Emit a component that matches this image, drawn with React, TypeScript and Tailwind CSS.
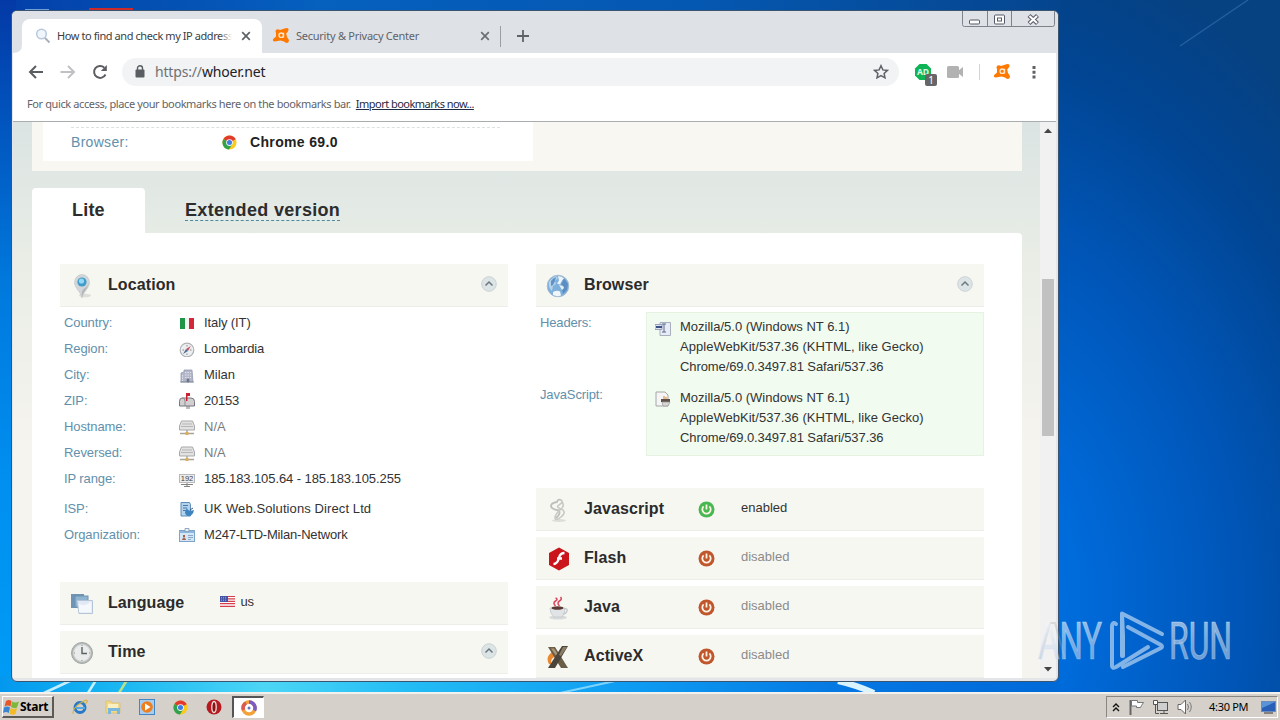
import type { ReactNode } from "react";

type IconName =
  | "flag-it" | "compass" | "building" | "mailbox" | "host" | "range" | "isp" | "card";

interface LocationRow {
  label: string;
  value: string;
  icon: IconName;
  muted?: boolean;
  tall?: boolean;
  tracking: string;
}

const LOCATION_ROWS: LocationRow[] = [
  { label: "Country:", value: "Italy (IT)", icon: "flag-it", tracking: "tracking-[-0.1px]" },
  { label: "Region:", value: "Lombardia", icon: "compass", tracking: "tracking-[-0.15px]" },
  { label: "City:", value: "Milan", icon: "building", tracking: "tracking-normal" },
  { label: "ZIP:", value: "20153", icon: "mailbox", tracking: "tracking-[-0.2px]" },
  { label: "Hostname:", value: "N/A", icon: "host", muted: true, tracking: "tracking-normal" },
  { label: "Reversed:", value: "N/A", icon: "host", muted: true, tracking: "tracking-normal" },
  { label: "IP range:", value: "185.183.105.64 - 185.183.105.255", icon: "range", tall: true, tracking: "tracking-[-0.08px]" },
  { label: "ISP:", value: "UK Web.Solutions Direct Ltd", icon: "isp", tracking: "tracking-[0.1px]" },
  { label: "Organization:", value: "M247-LTD-Milan-Network", icon: "card", tracking: "tracking-[-0.2px]" },
];

const UA_LINES = [
  { text: "Mozilla/5.0 (Windows NT 6.1)", tracking: "tracking-normal" },
  { text: "AppleWebKit/537.36 (KHTML, like Gecko)", tracking: "tracking-[0.03px]" },
  { text: "Chrome/69.0.3497.81 Safari/537.36", tracking: "tracking-[-0.1px]" },
];

function Wallpaper() {
  return (
    <svg className="absolute inset-0" width="1280" height="720" viewBox="0 0 1280 720">
      <defs>
        <linearGradient id="wp-top" x1="0" x2="1" y1="0" y2="0">
          <stop offset="0" stopColor="#033fa8" />
          <stop offset="0.3" stopColor="#0560be" />
          <stop offset="0.65" stopColor="#0558b2" />
          <stop offset="1" stopColor="#05458e" />
        </linearGradient>
        <linearGradient id="wp-left" x1="0" x2="0" y1="0" y2="1">
          <stop offset="0" stopColor="#0339a6" />
          <stop offset="0.4" stopColor="#0078dc" />
          <stop offset="0.7" stopColor="#0090f0" />
          <stop offset="1" stopColor="#009cf4" />
        </linearGradient>
        <radialGradient id="wp-right" gradientUnits="userSpaceOnUse" cx="0" cy="0" r="1" gradientTransform="translate(940 600) scale(520 680)">
          <stop offset="0" stopColor="#0078e6" />
          <stop offset="0.25" stopColor="#006cdc" />
          <stop offset="0.55" stopColor="#0057ba" />
          <stop offset="0.82" stopColor="#014593" />
          <stop offset="1" stopColor="#064182" />
        </radialGradient>
        <linearGradient id="wp-bottom" x1="0" x2="1" y1="0" y2="0">
          <stop offset="0" stopColor="#0398ee" />
          <stop offset="0.1" stopColor="#16b4f2" />
          <stop offset="0.25" stopColor="#4cd6f6" />
          <stop offset="0.38" stopColor="#24bdf5" />
          <stop offset="0.6" stopColor="#0d9bf2" />
          <stop offset="0.8" stopColor="#0577e2" />
          <stop offset="1" stopColor="#0069d8" />
        </linearGradient>
      </defs>
      <rect width="1280" height="720" fill="url(#wp-right)" />
      <rect width="1060" height="14" fill="url(#wp-top)" />
      <rect width="16" height="695" fill="url(#wp-left)" />
      <rect y="676" width="1060" height="18" fill="url(#wp-bottom)" />
      <path d="M25 9.500h24" stroke="#6f9fd4" />
      <rect x="89" y="8" width="44" height="3" fill="#cf2a2a" />
      <path d="M1180 46 L1248 0" stroke="#3d7dba" strokeWidth="1.5" opacity=".5" />
      <path d="M44 693 L72 680 M88 693 L96 680" stroke="#c5eefc" strokeWidth="2.5" />
      <path d="M119 693 L127 680" stroke="#b8e08a" strokeWidth="2.5" />
      <path d="M560 693 L615 681" stroke="#7dd3fa" strokeWidth="2" />
      <path d="M838 681 Q856 685 874 693" stroke="#d9f3ff" strokeWidth="6" fill="none" />
    </svg>
  );
}

function AvastMark({ size }: { size: number }) {
  return (
    <svg width={size} height={size} viewBox="0 0 18 18" className="shrink-0">
      <path
        d="M4.2 2.8 Q6 1.6 8 3 L12.5 1.4 Q16.8.2 16.6 3 Q16 5 14.2 6.4 L15 10 Q17.6 12.6 16.6 15 Q14.6 17 12 14.6 L8.5 13.6 L2.6 14.6 Q.2 14 1.2 12 L4 9.5 L4 6 Q2.8 4 4.2 2.8z"
        fill="#ff7800"
      />
      <circle cx="9.2" cy="8.2" r="2.2" fill="none" stroke="#ffe6cc" strokeWidth="1.3" />
      <path d="M11.6 5.8v4.600" stroke="#ffe6cc" strokeWidth="1.2" />
    </svg>
  );
}

function ChromeMark({ size }: { size: number }) {
  return (
    <svg width={size} height={size} viewBox="0 0 16 16" className="shrink-0">
      <circle cx="8" cy="8" r="7.5" fill="#fbcb1c" />
      <path d="M8 8 L1.5 4.2 A7.5 7.5 0 0 1 14.5 4.2z M8 4.5h6.7L8 8z" fill="#e23a2e" />
      <path d="M1.5 4.2 A7.5 7.5 0 0 0 7.4 15.5 L11 9.8 L8 8z" fill="#2fa14f" />
      <circle cx="8" cy="8" r="3.6" fill="#f5f5f5" />
      <circle cx="8" cy="8" r="2.7" fill="#3f7de0" />
    </svg>
  );
}

function CloseX({ color }: { color: string }) {
  return (
    <svg width="10" height="10" viewBox="0 0 10 10" className="shrink-0">
      <path d="M1.2 1.2l7.6 7.6M8.8 1.2L1.2 8.8" stroke={color} strokeWidth="1.7" />
    </svg>
  );
}

function WindowButtons() {
  return (
    <svg className="absolute -top-px right-[3px]" width="93" height="18" viewBox="0 0 93 18">
      <path d="M.5 0v14.5q0 2 2 2h88q2 0 2-2V0M25.500 0v16.500M49.500 0v16.500" fill="none" stroke="#7e828a" />
      <rect x="7.500" y="10" width="10" height="4" rx="1" fill="#fff" stroke="#555968" />
      <rect x="32.500" y="5" width="10" height="9" rx="1" fill="#fff" stroke="#555968" />
      <rect x="35.500" y="8" width="4" height="3" fill="#fff" stroke="#555968" />
      <path d="M67 5.500l8.500 8M75.500 5.500l-8.500 8" stroke="#5c5f6d" strokeWidth="4.200" />
      <path d="M67.500 6l7.500 7M75 6l-7.500 7" stroke="#fff" strokeWidth="2" />
    </svg>
  );
}

function TabStrip() {
  return (
    <div className="relative flex h-[42px] pl-px bg-[#dee1e6] rounded-t">
      <WindowButtons />
      <svg className="self-end mr-[-1px]" width="10" height="8" viewBox="0 0 10 8">
        <path d="M0 8 Q9 8 9 0 H10 V8z" fill="#fff" />
      </svg>
      <div className="mt-2 w-[240px] flex items-center bg-white rounded-t-lg pl-[13px] pr-[11px]">
        <svg width="16" height="16" viewBox="0 0 16 16" className="shrink-0">
          <circle cx="6.500" cy="6" r="4.800" fill="#eef5fb" stroke="#b9c8dc" strokeWidth="1.500" />
          <path d="M10 10l4.500 4.500" stroke="#a8b0bb" strokeWidth="2" />
        </svg>
        <span className="relative ml-[6px] w-[175px] overflow-hidden whitespace-nowrap text-[11px] tracking-[-0.42px] text-[#3c4043]">
          How to find and check my IP address
          <span className="absolute right-0 top-0 h-full w-3 bg-linear-to-r from-transparent to-white" />
        </span>
        <span className="ml-auto flex"><CloseX color="#5f6368" /></span>
      </div>
      <div className="mt-2 flex-1 flex items-center pl-[10px]">
        <AvastMark size={18} />
        <span className="ml-[6px] w-[184px] text-[11px] tracking-[-0.25px] text-[#5f6368] whitespace-nowrap">Security &amp; Privacy Center</span>
        <CloseX color="#6b6f75" />
        <span className="ml-[10px] w-px h-[21px] bg-[#9a9ea5]" />
        <svg className="ml-[16px]" width="12" height="12" viewBox="0 0 12 12">
          <path d="M6 0v12M0 6h12" stroke="#5f6368" strokeWidth="1.800" />
        </svg>
      </div>
    </div>
  );
}

function Toolbar() {
  return (
    <div className="flex h-[37px] items-center bg-white pl-[15px]">
      <svg width="16" height="14" viewBox="0 0 16 14">
        <path d="M15 7H2M8 1L2 7l6 6" fill="none" stroke="#5a5d61" strokeWidth="2" />
      </svg>
      <svg className="ml-4" width="16" height="14" viewBox="0 0 16 14">
        <path d="M.5 7H14M8 1l6 6-6 6" fill="none" stroke="#bfc1c4" strokeWidth="2" />
      </svg>
      <svg className="ml-4" width="16" height="16" viewBox="0 0 16 16">
        <path d="M13.500 10.500A6 6 0 1 1 12.300 3.600" fill="none" stroke="#5a5d61" strokeWidth="2" />
        <path d="M14.800 1v6h-6z" fill="#5a5d61" />
      </svg>
      <div className="ml-[14px] flex h-7 w-[777px] items-center rounded-full bg-[#f1f3f4] pl-[13px] pr-[10px]">
        <svg width="10" height="13" viewBox="0 0 10 13">
          <rect x=".5" y="4.500" width="9" height="8" rx="1" fill="#5a5d61" />
          <path d="M2.500 5V3.200a2.500 2.500 0 0 1 5 0V5" fill="none" stroke="#5a5d61" strokeWidth="1.400" />
        </svg>
        <span className="ml-[10px] text-[14px] tracking-[-0.17px] text-[#202124]">
          <span className="text-[#6d7176]">https://</span>whoer.net
        </span>
        <svg className="ml-auto" width="16" height="16" viewBox="0 0 16 16">
          <path d="M8 1.700l1.900 4.200 4.500.5-3.300 3 .9 4.500L8 11.600l-4 2.300.9-4.500-3.300-3 4.500-.5z" fill="none" stroke="#5f6368" strokeWidth="1.500" />
        </svg>
      </div>
      <span className="relative ml-[15px] size-[18px]">
        <svg width="18" height="18" viewBox="0 0 18 18">
          <path d="M5.500 1h7L17 5.500v7L12.500 17h-7L1 12.500v-7z" fill="#0fb457" />
          <text x="9" y="12.300" textAnchor="middle" fontSize="8.500" fontWeight="bold" fill="#dff7e8">AD</text>
        </svg>
        <span className="absolute left-[11px] top-[11px] flex size-3 items-center justify-center rounded-[2px] bg-[#666] text-[10px] leading-none text-white">1</span>
      </span>
      <svg className="ml-[15px]" width="17" height="14" viewBox="0 0 17 14">
        <rect x="0" y="1" width="12" height="12" rx="1.500" fill="#b2b2b2" />
        <path d="M11 6l5-4v10l-5-4z" fill="#b2b2b2" />
      </svg>
      <span className="ml-[15px] mr-[13px] h-4 w-px bg-[#d2d4d7]" />
      <AvastMark size={18} />
      <svg className="ml-[21px]" width="4" height="14" viewBox="0 0 4 14">
        <path d="M.5 1h3v3h-3zM.5 5.700h3v3h-3zM.5 10.400h3v3h-3z" fill="#5f6368" />
      </svg>
    </div>
  );
}

function Collapse() {
  return (
    <svg width="18" height="18" viewBox="0 0 18 18" className="shrink-0">
      <circle cx="9" cy="9" r="7.300" fill="#dde4e6" stroke="#cbd3d6" />
      <path d="M5.500 10.500L9 7l3.500 3.500" fill="none" stroke="#6b7880" strokeWidth="1.500" />
    </svg>
  );
}

function PinIcon() {
  return (
    <svg width="24" height="26" viewBox="0 0 24 26">
      <ellipse cx="15" cy="22.500" rx="6" ry="1.800" fill="#deded8" />
      <path d="M12 25C11 19 4.500 15 4.500 9.500a7.500 8 0 0 1 15 0C19.500 15 13 19 12 25z" fill="#d3d6d8" stroke="#c0c4c6" strokeWidth=".6" />
      <path d="M12 24C11 19 13 16 15 15q3-2 3.500-5c0 5-5 8-6.500 14z" fill="#b2b6b8" />
      <circle cx="12" cy="9" r="4.600" fill="#3f9ccb" />
      <circle cx="11.500" cy="8" r="2.600" fill="#93d8f4" />
    </svg>
  );
}

function GlobeIcon() {
  return (
    <svg width="24" height="24" viewBox="0 0 24 24">
      <circle cx="12" cy="12" r="10.800" fill="#7fb0dc" stroke="#a5b7c9" strokeWidth=".8" />
      <path d="M3 8q3-5 7-6l2 2-3 3 1 3-3 2-1 5q-4-3-3-9z" fill="#b5d2ea" />
      <path d="M5 7q2-3 5-4l-1 4-2 4-2 1z" fill="#5f93c8" />
      <path d="M16 3.500q4 2 6 6.500l-1 6-4 4-1-4 2-3-3-3 2-3z" fill="#5b8fc4" />
      <path d="M12 2q4 0 6 2.500l-2 2-2 4-3-1 2-3z" fill="#eef5fa" />
      <path d="M13 11l4 1 1 2-2 2z" fill="#e2edf6" />
      <path d="M7 18q4-2 7-.5l1 4q-4 1.500-8-.5z" fill="#f2f6f9" />
    </svg>
  );
}

function LanguageIcon() {
  return (
    <svg width="24" height="24" viewBox="0 0 24 24">
      <rect x="1.500" y="2.500" width="12" height="13" fill="#6c95b8" stroke="#7294b0" />
      <rect x="5" y="4" width="13" height="11" fill="#8fb4cf" stroke="#6d91af" />
      <path d="M7 8.500h15.500v13H9z" fill="#e6edf6" fillOpacity=".93" stroke="#b5c5d8" />
      <path d="M9 12q6 3 12-2v10H9z" fill="#f5f8fc" />
    </svg>
  );
}

function ClockIcon() {
  return (
    <svg width="24" height="24" viewBox="0 0 24 24">
      <circle cx="12" cy="12" r="10.500" fill="#b5bab9" stroke="#a3a8a8" />
      <circle cx="12" cy="12" r="8.500" fill="#e9ecea" stroke="#d0d4d2" />
      <path d="M12 6v6.500h5" fill="none" stroke="#5b6264" strokeWidth="1.400" />
      <path d="M12 4v1M12 19v1M4 12h1M19 12h1" stroke="#8b9192" />
    </svg>
  );
}

function ScrollIcon() {
  return (
    <svg width="24" height="26" viewBox="0 0 24 26">
      <ellipse cx="13" cy="23.500" rx="7" ry="1.500" fill="#dcdcd8" />
      <path d="M15 3 Q12 1.500 11 5 Q5 6 5 9 Q5 12 13 13.500 Q15 17 10 21" fill="none" stroke="#bebebc" strokeWidth="1.800" />
      <path d="M15 3 Q18 5 13 8 Q9 10 17 13 Q20 16 15 20 Q10 24 9 21 Q9 17 16 11 Q19 8 15 3" fill="none" stroke="#c8c8c5" strokeWidth="1.600" />
    </svg>
  );
}

function FlashIcon() {
  return (
    <svg width="24" height="24" viewBox="0 0 24 24">
      <path d="M13 .5l10 5.500v12L13 23.500 3 18V6z" fill="#c9151b" />
      <path d="M18.500 6q-4.500 0-5.500 5-1.500 6-5.500 6M11 11.500h5" fill="none" stroke="#fff" strokeWidth="2.300" />
    </svg>
  );
}

function JavaIcon() {
  return (
    <svg width="24" height="26" viewBox="0 0 24 26">
      <ellipse cx="12" cy="22.500" rx="9" ry="2" fill="#d9dadb" />
      <path d="M4 13h15q0 6-3 9H8q-4-3-4-9z" fill="#e1e4e6" stroke="#c0c4c6" strokeWidth=".7" />
      <path d="M18 14q4-1 3 2t-4 3" fill="none" stroke="#c5c9cb" strokeWidth="1.400" />
      <ellipse cx="11.500" cy="13" rx="6" ry="1.800" fill="#5a3a35" />
      <path d="M9.500 11q-3-3 0-5t0-3M13.500 11q-3-3 0-5t1-4" fill="none" stroke="#dc4a60" strokeWidth="1.600" />
    </svg>
  );
}

function ActiveXIcon() {
  return (
    <svg width="24" height="24" viewBox="0 0 24 24">
      <path d="M6 7q-7 5-3 12l3 1q-3-6 4-9z" fill="#e8892f" />
      <path d="M2 2h7l13 21h-7z" fill="#6c5d47" />
      <path d="M5 3.500h3l6 9-2 1z" fill="#a89878" />
      <path d="M16 1h6L9 23H2z" fill="#4b443a" />
      <path d="M17 2h4l-6 9-2-1z" fill="#8d7f66" />
    </svg>
  );
}

function PowerIcon({ on }: { on: boolean }) {
  return (
    <svg width="17" height="17" viewBox="0 0 17 17" className="shrink-0">
      <circle cx="8.500" cy="8.500" r="8" fill={on ? "#48b850" : "#c0562b"} />
      <path d="M5.600 5.300a4.200 4.200 0 1 0 5.800 0M8.500 3.500v5" fill="none" stroke="#fff4e6" strokeWidth="1.800" />
    </svg>
  );
}

function RowIcon({ name }: { name: IconName }) {
  switch (name) {
    case "flag-it":
      return (
        <svg width="16" height="16" viewBox="0 0 16 16">
          <rect x="1" y="3" width="14" height="11" fill="#f4f4f2" />
          <path d="M1 3h5v11H1z" fill="#209447" />
          <path d="M10 3h5v11h-5z" fill="#d4283a" />
        </svg>
      );
    case "compass":
      return (
        <svg width="16" height="16" viewBox="0 0 16 16">
          <circle cx="8" cy="9" r="6.800" fill="#eceeef" stroke="#b0b3b6" strokeWidth="1.200" />
          <path d="M11.800 5L9 10 7 8z" fill="#c9505a" />
          <path d="M4 13L7 8l2 2z" fill="#4e6d96" />
          <path d="M8 4v1.500M8 12.500V14M3.500 9H5M11 9h1.500" stroke="#888" />
        </svg>
      );
    case "building":
      return (
        <svg width="16" height="16" viewBox="0 0 16 16">
          <path d="M2 6l3-1V3h8l1 12H2z" fill="#b3b6c8" stroke="#969bb0" strokeWidth=".8" />
          <path d="M6 5.500h6M6 8h6M6 10.500h6M3.500 8v6" stroke="#e1e3ec" strokeDasharray="1.500 1" />
          <path d="M8 12h2v3H8zM1 15h14" fill="#666d84" stroke="#777e92" strokeWidth=".7" />
        </svg>
      );
    case "mailbox":
      return (
        <svg width="16" height="16" viewBox="0 0 16 16">
          <path d="M3 5h9q3.500 0 3.500 3.500V13H.5V8.500Q.5 5 3 5z" fill="#d2cfd2" stroke="#77757b" />
          <path d="M6 13V8q0-3-2.500-3" fill="none" stroke="#8b898f" />
          <path d="M8 13v3M10 13v3" stroke="#79777c" />
          <path d="M7 0h4v3H8.500v5H7z" fill="#cd202e" />
        </svg>
      );
    case "host":
      return (
        <svg width="16" height="16" viewBox="0 0 16 16">
          <path d="M2.500 2h11l2 5v4H.5V7z" fill="#e2e2e2" stroke="#a9a9a9" />
          <path d="M3 5h10M2 7.500h12" stroke="#b5b5b5" />
          <path d="M8 11v3M1 14.500h14" stroke="#a8a499" strokeWidth="1.400" />
          <path d="M6.500 13h3v3h-3z" fill="#dcae55" />
        </svg>
      );
    case "range":
      return (
        <svg width="16" height="16" viewBox="0 0 16 16">
          <rect x=".5" y="3.500" width="15" height="8" fill="#ededed" stroke="#b9b9b9" />
          <text x="8" y="10" textAnchor="middle" fontSize="7.500" fill="#3b3b3b">192</text>
          <path d="M8 12v3M2 13.500h12M5 15.500h6" stroke="#828282" />
        </svg>
      );
    case "isp":
      return (
        <svg width="16" height="16" viewBox="0 0 16 16">
          <path d="M2 1.500h8.500l1 2V15H2z" fill="#b3d2ec" stroke="#5e8cb8" />
          <path d="M4 4.500h5M4 7h4M4 9.500h3" stroke="#4779aa" />
          <path d="M8 7q1 4 7 2-1 6-6 6-3-1-3-4z" fill="#3d84c1" />
          <path d="M11 9l3-2" stroke="#315d87" />
        </svg>
      );
    case "card":
      return (
        <svg width="16" height="16" viewBox="0 0 16 16">
          <rect x=".5" y="3.500" width="15" height="11" fill="#d4e7f7" stroke="#7ca3c8" />
          <path d="M.5 4h15v2H.5z" fill="#8db7dc" />
          <path d="M6 1.500h4v3H6z" fill="#e6edf3" stroke="#7f99b1" strokeWidth=".8" />
          <path d="M3 13q0-2 2-2t2 2z M4 8h2v2.500H4z" fill="#a85e45" />
          <path d="M9 8.500h5M9 10.500h5M9 12.500h3" stroke="#8aa9c5" />
        </svg>
      );
  }
}

function SectionHead({ icon, title, children }: { icon: ReactNode; title: string; children?: ReactNode }) {
  return (
    <div className="flex h-[43px] items-center border-b border-[#edeee9] bg-[#f7f7f2] pl-[10px] pr-[10px]">
      <span className="flex w-[38px] pt-px">{icon}</span>
      <h2 className="text-[16px] font-bold tracking-[0.1px] text-[#2b2b2b]">{title}</h2>
      {children}
    </div>
  );
}

function LocationColumn() {
  return (
    <div className="w-[448px]">
      <SectionHead icon={<PinIcon />} title="Location">
        <span className="ml-auto flex pb-[3px]"><Collapse /></span>
      </SectionHead>
      <div className="h-[275px] pt-[3px]">
        {LOCATION_ROWS.map((row) => (
          <div key={row.label} className={row.tall ? "flex h-[30px] items-start" : "flex h-[26px] items-start"}>
            <span className="w-[119px] pl-1 leading-[26px] tracking-[-0.1px] text-[#6290ab]">{row.label}</span>
            <span className="w-[25px] pt-[5px]"><RowIcon name={row.icon} /></span>
            <span className={`leading-[26px] ${row.tracking} ${row.muted ? "text-[#7b7b7b]" : "text-[#333]"}`}>{row.value}</span>
          </div>
        ))}
      </div>
      <SectionHead icon={<LanguageIcon />} title="Language">
        <span className="ml-[36px] flex items-center gap-[5px] pb-[3px] text-[#333]">
          <svg width="15" height="11" viewBox="0 0 15 11">
            <path d="M0 0h15v11H0z" fill="#fff" />
            <path d="M0 .5h15M0 2.900h15M0 5.300h15M0 7.700h15M0 10.300h15" stroke="#d33f4b" strokeWidth="1.200" />
            <path d="M0 0h8v6H0z" fill="#4355a4" />
            <path d="M1 1.500h6M1 3h6M1 4.500h6" stroke="#b7bfe2" strokeWidth=".6" strokeDasharray="1 1" />
          </svg>
          us
        </span>
      </SectionHead>
      <div className="h-[6px]" />
      <SectionHead icon={<ClockIcon />} title="Time">
        <span className="ml-auto flex pb-[3px]"><Collapse /></span>
      </SectionHead>
    </div>
  );
}

function UserAgent({ icon }: { icon: ReactNode }) {
  return (
    <div className="flex pl-[8px]">
      <span className="w-[25px] pt-[3px]">{icon}</span>
      <div className="whitespace-nowrap leading-5 text-[#333]">
        {UA_LINES.map((line) => (
          <p key={line.text} className={line.tracking}>{line.text}</p>
        ))}
      </div>
    </div>
  );
}

function Plugin({ icon, title, on }: { icon: ReactNode; title: string; on?: boolean }) {
  return (
    <div className="mb-[6px]">
      <SectionHead icon={icon} title={title}>
        <span className="ml-auto flex w-[276px] items-center">
          <span className="w-[43px] pt-px"><PowerIcon on={!!on} /></span>
          <span className={on ? "pb-[3px] text-[#333]" : "pb-[3px] text-[#8b8b8b]"}>{on ? "enabled" : "disabled"}</span>
        </span>
      </SectionHead>
    </div>
  );
}

function BrowserColumn() {
  return (
    <div className="w-[448px]">
      <SectionHead icon={<GlobeIcon />} title="Browser">
        <span className="ml-auto flex pb-[3px]"><Collapse /></span>
      </SectionHead>
      <div className="flex h-[181px] pt-[5px]">
        <div className="w-[110px] pl-1 tracking-[-0.15px] text-[#6290ab]">
          <p className="h-[72px] leading-[22px]">Headers:</p>
          <p className="leading-[22px]">JavaScript:</p>
        </div>
        <div className="flex h-36 flex-1 flex-col gap-[11px] border border-[#e6f2e2] bg-[#f1fbf0] pt-1">
          <UserAgent
            icon={
              <svg width="16" height="16" viewBox="0 0 16 16">
                <path d="M5 2.500h10.500v13H5z" fill="#e8edf5" stroke="#a9b0bd" />
                <path d="M0 4.500h7v5H0z" fill="#dfe5ef" stroke="#8791a8" strokeWidth=".8" />
                <path d="M1 7h6" stroke="#395184" strokeWidth="2" />
                <path d="M7 4h4M9 4v8M7 12h4" stroke="#596b91" />
              </svg>
            }
          />
          <UserAgent
            icon={
              <svg width="16" height="16" viewBox="0 0 16 16">
                <path d="M1 1h9l3 3v11H1z" fill="#f5f5f5" stroke="#a6a6a6" />
                <path d="M6 8h9v3H6z" fill="#5e5149" />
                <path d="M7 11h8l-2 4H8z" fill="#d6d6d6" stroke="#999" strokeWidth=".7" />
                <path d="M9 5v3M11 6v2" stroke="#d88434" />
              </svg>
            }
          />
        </div>
      </div>
      <Plugin icon={<ScrollIcon />} title="Javascript" on />
      <Plugin icon={<FlashIcon />} title="Flash" />
      <Plugin icon={<JavaIcon />} title="Java" />
      <Plugin icon={<ActiveXIcon />} title="ActiveX" />
    </div>
  );
}

function WhoerPage() {
  return (
    <div className="h-full w-[1027px] overflow-hidden bg-linear-to-b from-[#dbe4e3] via-[#e9ede6] via-25% to-[#f6f4ef] to-60% pl-[19px] font-['Liberation_Sans',Arial,sans-serif] text-[13px]">
      <div className="h-[49px] w-[990px] bg-[#f8f7f2] pl-[11px]">
        <div className="h-[39px] w-[490px] bg-white pl-7 pr-[33px] pt-[5px]">
          <div className="border-t border-dashed border-[#dbe0e0]" />
          <div className="flex h-[29px] items-center">
            <span className="w-[151px] text-[14px] tracking-[0.3px] text-[#6290ab]">Browser:</span>
            <ChromeMark size={15} />
            <span className="ml-[13px] text-[14px] font-bold tracking-[0.35px] text-[#222]">Chrome 69.0</span>
          </div>
        </div>
      </div>
      <div className="mt-[17px] flex h-[45px] items-start text-[18px] font-bold leading-[21px] text-[#2d2d2d]">
        <div className="h-[45px] w-[113px] rounded-t bg-white pl-10 pt-3 tracking-[0.2px]">Lite</div>
        <div className="ml-10 mt-3 h-[21px] border-b border-dashed border-[#4c8ba1] tracking-[0.32px]">Extended version</div>
      </div>
      <div className="flex h-[450px] w-[990px] gap-7 rounded-tr bg-white pl-7 pt-[31px]">
        <LocationColumn />
        <BrowserColumn />
      </div>
    </div>
  );
}

function BrowserWindow() {
  return (
    <div className="absolute left-[11px] top-[10px] flex h-[672px] w-[1048px] flex-col overflow-hidden rounded-md border border-[#3b5470] bg-[#e4e5e8] font-['Noto_Sans',Tahoma,sans-serif]">
      <TabStrip />
      <div className="mr-[2px] ml-px flex flex-1 flex-col">
        <Toolbar />
        <div className="flex h-8 items-center border-b border-[#a9adaf] bg-white pb-[2px] pl-[14px] text-[11px] text-[#5f6368]">
          <span className="whitespace-nowrap tracking-[-0.39px]">For quick access, place your bookmarks here on the bookmarks bar.</span>
          <span className="ml-[5px] whitespace-nowrap tracking-[-0.52px] text-[#1f2a44] underline">Import bookmarks now...</span>
        </div>
        <div className="flex h-[556px] overflow-hidden">
          <WhoerPage />
          <div className="flex w-4 flex-col items-center bg-[#f1f1f1]">
            <svg className="mt-[6px]" width="8" height="5" viewBox="0 0 8 5"><path d="M0 5l4-4.500L8 5z" fill="#454545" /></svg>
            <div className="mt-[146px] h-[157px] w-3 bg-[#c1c1c1]" />
            <svg className="mt-auto mb-[6px]" width="8" height="5" viewBox="0 0 8 5"><path d="M0 0l4 4.500L8 0z" fill="#454545" /></svg>
          </div>
        </div>
      </div>
    </div>
  );
}

function Watermark() {
  return (
    <svg className="absolute left-[1036px] top-[606px]" width="210" height="70" viewBox="0 0 210 70">
      <defs>
        <linearGradient id="wm" x1="0" x2="0" y1="0" y2="1">
          <stop offset="0" stopColor="#fff" stopOpacity=".62" />
          <stop offset="0.5" stopColor="#d7e2f0" stopOpacity=".56" />
          <stop offset="1" stopColor="#b9cdea" stopOpacity=".55" />
        </linearGradient>
      </defs>
      <path d="M4 53L14 17h5l10 36" fill="none" stroke="#9da2a8" strokeOpacity=".3" strokeWidth="2" />
      <g fill="url(#wm)" stroke="url(#wm)" strokeWidth=".7" fontFamily="Roboto, sans-serif" fontSize="52">
        <text transform="translate(2 53) scale(.64 1)" textLength="100" lengthAdjust="spacingAndGlyphs">ANY</text>
        <text transform="translate(133 53) scale(.6 1)" textLength="105" lengthAdjust="spacingAndGlyphs">RUN</text>
      </g>
      <g fill="none" stroke="#b9d5f2" strokeOpacity=".7" strokeWidth="4" strokeLinejoin="round" strokeLinecap="round">
        <path d="M87 50V30L86 7.500Q86 16 86 7.500L126 28M86 8v42" strokeOpacity=".72" />
        <path d="M80 23Q76 20 76 26V65Q76 68 80 66L112 46" transform="translate(0 -5)" />
        <path d="M92 21L125 39Q127 41 125 42L87 61" />
      </g>
    </svg>
  );
}

function Taskbar() {
  return (
    <div className="absolute inset-x-0 bottom-0 flex h-[28px] items-center border-t-2 border-[#f3f1ee] bg-[#d5d0c9] font-['Noto_Sans',Tahoma,sans-serif] text-[11px] text-black">
      <div className="ml-[2px] flex h-[22px] w-[52px] items-center border border-r-2 border-b-2 border-t-white border-l-white border-r-[#5c5a57] border-b-[#5c5a57]">
        <svg width="17" height="16" viewBox="0 0 17 16" className="shrink-0">
          <path d="M3 2q3-2 5.500 0l-1 5.500q-3-2-6 0z" fill="#e5572a" />
          <path d="M9 2.500q3 2 7 0l-2 6q-3 1.500-6-.5z" fill="#7cb93b" />
          <path d="M1 8.500q3-2 6 0l-1.200 5.500q-3-2-5.800 0z" fill="#3a85d2" />
          <path d="M7.500 9q3 2 6.500 0L12.500 15q-3.500 1.500-6-.5z" fill="#f3bc27" />
        </svg>
        <span className="text-[12px] font-bold tracking-[-0.25px]">Start</span>
      </div>
      <svg className="ml-[18px]" width="16" height="16" viewBox="0 0 16 16">
        <circle cx="8" cy="8.500" r="5" fill="none" stroke="#2878c8" strokeWidth="3" />
        <path d="M4 9h9" stroke="#55aae5" strokeWidth="2" />
        <path d="M1 14.500Q0 8 14 1q3 1-1 4" fill="none" stroke="#d6b33d" strokeWidth="1.200" />
      </svg>
      <svg className="ml-[17px]" width="16" height="16" viewBox="0 0 16 16">
        <path d="M1 2h5l1 2h8v10H1z" fill="#f0d98a" stroke="#d6b862" strokeWidth=".6" />
        <path d="M3 5h10v4H3z" fill="#faefc0" />
        <path d="M3 15V9h12v6h-3v-3H6v3z" fill="#79b7dc" />
      </svg>
      <svg className="ml-[18px]" width="16" height="16" viewBox="0 0 16 16">
        <rect x=".5" y=".5" width="15" height="15" fill="#a9cdee" stroke="#4386c5" />
        <circle cx="8" cy="8" r="5.800" fill="#ec7f1f" />
        <path d="M6 4.500L11.500 8 6 11.500z" fill="#fff" />
      </svg>
      <span className="ml-[18px]"><ChromeMark size={15} /></span>
      <svg className="ml-[18px]" width="16" height="16" viewBox="0 0 16 16">
        <circle cx="8" cy="8" r="7.500" fill="#b51a20" />
        <ellipse cx="8" cy="8" rx="2.200" ry="5.500" fill="#8c1216" stroke="#eee0dc" strokeWidth="1.300" />
      </svg>
      <div className="ml-[10px] flex h-[22px] w-8 items-center justify-center border border-l-2 border-t-2 border-t-[#555] border-l-[#555] border-white bg-white">
        <svg width="16" height="16" viewBox="0 0 16 16">
          <circle cx="8" cy="8" r="6" fill="none" stroke="#f3a13b" strokeWidth="3.500" />
          <path d="M8 2a6 6 0 0 1 5.500 8.500" fill="none" stroke="#7c5bc2" strokeWidth="3.500" />
          <path d="M2.500 10A6 6 0 0 1 5 3" fill="none" stroke="#dc5a54" strokeWidth="3.500" />
          <circle cx="8" cy="8" r="1.500" fill="#6b72c8" />
        </svg>
      </div>
      <div className="ml-auto mr-[2px] flex h-[22px] w-[172px] items-center border border-t-[#8a8782] border-l-[#8a8782] border-r-white border-b-white pl-[5px]">
        <svg width="8" height="9" viewBox="0 0 8 9">
          <path d="M1 4l3-3 3 3M1 8l3-3 3 3" fill="none" stroke="#111" strokeWidth="1.400" />
        </svg>
        <svg className="ml-[9px]" width="16" height="16" viewBox="0 0 16 16">
          <path d="M1.500 1v15" stroke="#666" strokeWidth="2" />
          <path d="M2.500 1.500h6v2h6l-2 3-1 2H7.500V7h-5z" fill="#fff" stroke="#777" />
        </svg>
        <svg className="ml-[7px]" width="17" height="16" viewBox="0 0 17 16">
          <rect x="5.500" y="3.500" width="10" height="8" fill="#cfcfcf" stroke="#555" />
          <path d="M8 14.500h8M12 12v2" stroke="#555" />
          <path d="M1.500 1.500h4v4h-4z" fill="#fff" stroke="#555" />
          <path d="M3.500 6v8.500H7" fill="none" stroke="#555" />
        </svg>
        <svg className="ml-[8px]" width="16" height="16" viewBox="0 0 16 16">
          <path d="M1 5.500h3L8.500 1v14L4 10.500H1z" fill="#fff" stroke="#666" />
          <path d="M10.500 5q2 3 0 6M12.500 3q3.500 5 0 10" fill="none" stroke="#777" />
        </svg>
        <span className="ml-[16px] whitespace-nowrap tracking-[-0.3px]">4:30 PM</span>
        <svg className="ml-auto mr-px" width="15" height="13" viewBox="0 0 15 13">
          <rect x=".5" y=".5" width="14" height="10" fill="#2860b8" stroke="#6b8cba" />
          <path d="M1 1h13L1 7z" fill="#5a93d8" />
          <path d="M3 12h9" stroke="#333" />
        </svg>
      </div>
    </div>
  );
}

export default function App() {
  return (
    <div className="relative h-[720px] w-[1280px] overflow-hidden bg-[#0060c4]">
      <Wallpaper />
      <BrowserWindow />
      <Watermark />
      <Taskbar />
    </div>
  );
}
